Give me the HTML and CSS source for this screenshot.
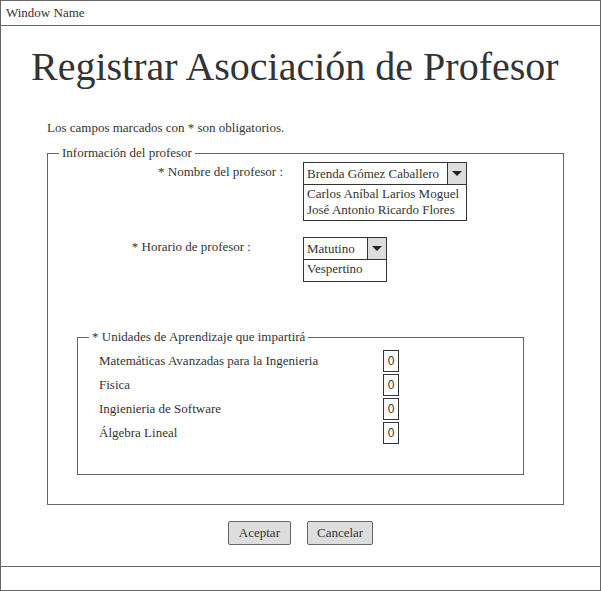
FILE: index.html
```html
<!DOCTYPE html>
<html>
<head>
    <meta charset="UTF-8">
    <title>Registrar Asociación de Profesor</title>
    <link rel="stylesheet" href="styles.css">
</head>
<body>
    <div class="window">
        <div class="titlebar">Window Name</div>

        <div class="main">
            <h1>Registrar Asociación de Profesor</h1>
            <p class="note">Los campos marcados con * son obligatorios.</p>

            <fieldset class="group">
                <legend>Información del profesor</legend>

                <div class="row row-nombre">
                    <label>* Nombre del profesor :</label>
                    <div class="combo combo-nombre">
                        <div class="combo-head">
                            <span class="combo-value">Brenda Gómez Caballero</span>
                            <span class="combo-btn"><span class="arrow"></span></span>
                        </div>
                        <div class="combo-list">
                            <div>Carlos Aníbal Larios Moguel</div>
                            <div>José Antonio Ricardo Flores</div>
                        </div>
                    </div>
                </div>

                <div class="row row-horario">
                    <label>* Horario de profesor :</label>
                    <div class="combo combo-horario">
                        <div class="combo-head">
                            <span class="combo-value">Matutino</span>
                            <span class="combo-btn"><span class="arrow"></span></span>
                        </div>
                        <div class="combo-list">
                            <div>Vespertino</div>
                        </div>
                    </div>
                </div>

                <fieldset class="group units">
                    <legend>* Unidades de Aprendizaje que impartirá</legend>
                    <div class="unit"><span class="unit-name">Matemáticas Avanzadas para la Ingenieria</span><span class="count">0</span></div>
                    <div class="unit"><span class="unit-name">Fisica</span><span class="count">0</span></div>
                    <div class="unit"><span class="unit-name">Ingienieria de Software</span><span class="count">0</span></div>
                    <div class="unit"><span class="unit-name">Álgebra Lineal</span><span class="count">0</span></div>
                </fieldset>
            </fieldset>

            <div class="actions">
                <button class="btn btn-ok">Aceptar</button>
                <button class="btn">Cancelar</button>
            </div>
        </div>

        <div class="statusbar"></div>
    </div>
</body>
</html>
```

FILE: styles.css
```css
body {
    margin: 0;
    font-family: "Liberation Serif", serif;
    font-size: 13px;
    color: #333;
    background: #fff;
}
.window {
    width: 601px;
    height: 591px;
    box-sizing: border-box;
    border: 1px solid #666;
    display: flex;
    flex-direction: column;
}
.titlebar {
    height: 24px;
    line-height: 24px;
    padding-left: 5px;
    border-bottom: 1px solid #666;
}
.main {
    flex: 1;
}
.statusbar {
    height: 23px;
    border-top: 1px solid #666;
}
h1 {
    margin: 17px 0 0 30px;
    font-family: "Liberation Serif", serif;
    font-size: 40px;
    font-weight: normal;
    line-height: 48px;
    white-space: nowrap;
}
.note {
    margin: 29px 0 0 46px;
    line-height: 16px;
}
fieldset.group {
    margin: 9px 0 0 46px;
    width: 517px;
    height: 360px;
    box-sizing: border-box;
    padding: 0;
    border: 1px solid #666;
}
.group legend {
    margin-left: 11px;
    padding: 0 3px;
    line-height: 16px;
}
.row {
    display: flex;
    align-items: flex-start;
}
.row label {
    width: 255px;
    box-sizing: border-box;
    text-align: right;
    line-height: 16px;
    padding-top: 2px;
}
.row-nombre {
    margin-top: 1px;
}
.row-nombre label {
    padding-right: 20px;
}
.row-horario {
    margin-top: 16px;
}
.row-horario label {
    padding-right: 52px;
}
.combo {
    box-sizing: border-box;
    border: 1px solid #333;
    line-height: 16px;
}
.combo-nombre {
    width: 164px;
}
.combo-horario {
    width: 84px;
}
.combo-head {
    display: flex;
    height: 21px;
    border-bottom: 1px solid #333;
}
.combo-value {
    flex: 1;
    padding: 3px 0 0 3px;
    white-space: nowrap;
}
.combo-btn {
    width: 18px;
    border-left: 1px solid #333;
    background: #ddd;
    display: flex;
    align-items: center;
    justify-content: center;
}
.arrow {
    width: 0;
    height: 0;
    border-left: 5px solid transparent;
    border-right: 5px solid transparent;
    border-top: 5px solid #222;
}
.combo-list {
    padding: 1px 3px 2px;
}
.combo-horario .combo-list {
    padding-bottom: 4px;
}
fieldset.units {
    margin: 47px 0 0 29px;
    width: 447px;
    height: 146px;
}
.unit {
    display: flex;
    align-items: center;
    height: 22px;
    margin-bottom: 2px;
}
.unit:first-of-type {
    margin-top: 5px;
}
.unit-name {
    width: 284px;
    padding-left: 21px;
}
.count {
    width: 14px;
    height: 20px;
    border: 1px solid #333;
    font-family: "Liberation Sans", sans-serif;
    font-size: 12px;
    line-height: 20px;
    text-align: center;
}
.actions {
    display: flex;
    justify-content: center;
    gap: 16px;
    margin-top: 16px;
}
.btn {
    height: 24px;
    padding: 0 9px;
    border: 1px solid #666;
    border-radius: 2px;
    background: #ddd;
    font-family: "Liberation Serif", serif;
    font-size: 13px;
    color: #333;
}
.btn-ok {
    padding: 0 10px;
}
```
